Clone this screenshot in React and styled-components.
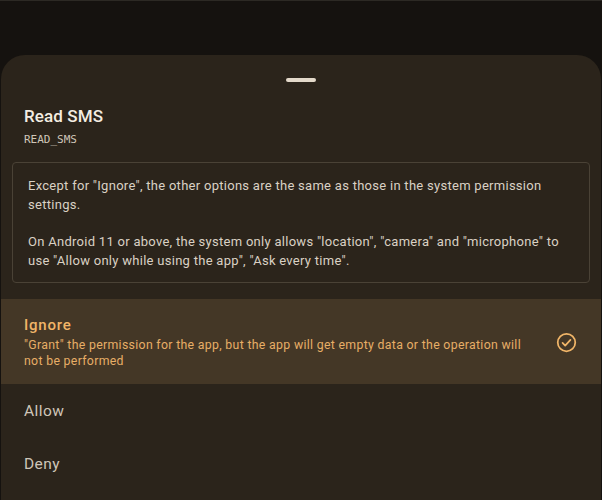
import React from 'react'
import styled, { createGlobalStyle } from 'styled-components'

const GlobalStyle = createGlobalStyle`
  html, body {
    margin: 0;
    padding: 0;
    background: #15120f;
    font-family: Roboto, "Liberation Sans", sans-serif;
  }
`

const Screen = styled.div`
  width: 602px;
  height: 500px;
  overflow: hidden;
  background: #15120f;
  border-top: 1px solid #2c2924;
  box-sizing: border-box;
  padding: 54px 1px 0 1px;
`

const Sheet = styled.div`
  height: 100%;
  background: #2b241b;
  border-radius: 24px 24px 0 0;
  display: flex;
  flex-direction: column;
`

const Handle = styled.div`
  align-self: center;
  width: 30px;
  height: 4px;
  border-radius: 2px;
  background: #e3d9ca;
  margin-top: 23px;
`

const Header = styled.div`
  padding: 24px 23px 0 23px;
`

const Title = styled.div`
  color: #f4ede2;
  font-size: 17px;
  font-weight: 500;
  line-height: 20px;
  letter-spacing: 0.1px;
`

const Code = styled.div`
  margin-top: 7px;
  color: #cfc6b8;
  font-family: "DejaVu Sans Mono", "Liberation Mono", monospace;
  font-size: 11px;
  line-height: 14px;
`

const InfoBox = styled.div`
  margin: 15px 11px 0 11px;
  border: 1px solid #4a4236;
  border-radius: 4px;
  padding: 13px 12px 12px 15px;
  color: #dad1c4;
  font-size: 13px;
  line-height: 19px;
  letter-spacing: 0.28px;
  p {
    margin: 0;
  }
  p + p {
    margin-top: 18px;
  }
`

const Options = styled.div`
  margin-top: 16px;
  display: flex;
  flex-direction: column;
`

const Option = styled.div`
  display: flex;
  align-items: center;
  padding: ${p => (p.$selected ? '16px 24px 15px 23px' : '0 24px 0 23px')};
  min-height: ${p => (p.$selected ? 'auto' : '53px')};
  background: ${p => (p.$selected ? '#443726' : 'transparent')};
`

const OptionText = styled.div`
  flex: 1;
  padding-right: 27px;
`

const OptionTitle = styled.div`
  color: ${p => (p.$selected ? '#f1b568' : '#cfc6b9')};
  font-size: ${p => (p.$selected ? '15px' : '15.5px')};
  font-weight: ${p => (p.$selected ? 500 : 400)};
  line-height: 20px;
  letter-spacing: ${p => (p.$selected ? '0.8px' : '0.45px')};
`

const OptionDesc = styled.div`
  margin-top: 3px;
  color: #e7ae66;
  font-size: 12.3px;
  line-height: 15.5px;
  letter-spacing: 0.32px;
`

const Check = () => (
  <svg width="21" height="21" viewBox="0 0 24 24" fill="none" stroke="#f1b568" strokeWidth="2" strokeLinecap="round" strokeLinejoin="round">
    <circle cx="12" cy="12" r="10" />
    <path d="M7.5 12.5l3 3 6-6.5" />
  </svg>
)

const options = [
  {
    title: 'Ignore',
    desc: '"Grant" the permission for the app, but the app will get empty data or the operation will not be performed',
    selected: true,
  },
  { title: 'Allow' },
  { title: 'Deny' },
]

export default function App() {
  return (
    <>
      <GlobalStyle />
      <Screen>
        <Sheet>
          <Handle />
          <Header>
            <Title>Read SMS</Title>
            <Code>READ_SMS</Code>
          </Header>
          <InfoBox>
            <p>Except for "Ignore", the other options are the same as those in the system permission settings.</p>
            <p>On Android 11 or above, the system only allows "location", "camera" and "microphone" to use "Allow only while using the app", "Ask every time".</p>
          </InfoBox>
          <Options>
            {options.map(o => (
              <Option key={o.title} $selected={o.selected}>
                <OptionText>
                  <OptionTitle $selected={o.selected}>{o.title}</OptionTitle>
                  {o.desc && <OptionDesc>{o.desc}</OptionDesc>}
                </OptionText>
                {o.selected && <Check />}
              </Option>
            ))}
          </Options>
        </Sheet>
      </Screen>
    </>
  )
}
